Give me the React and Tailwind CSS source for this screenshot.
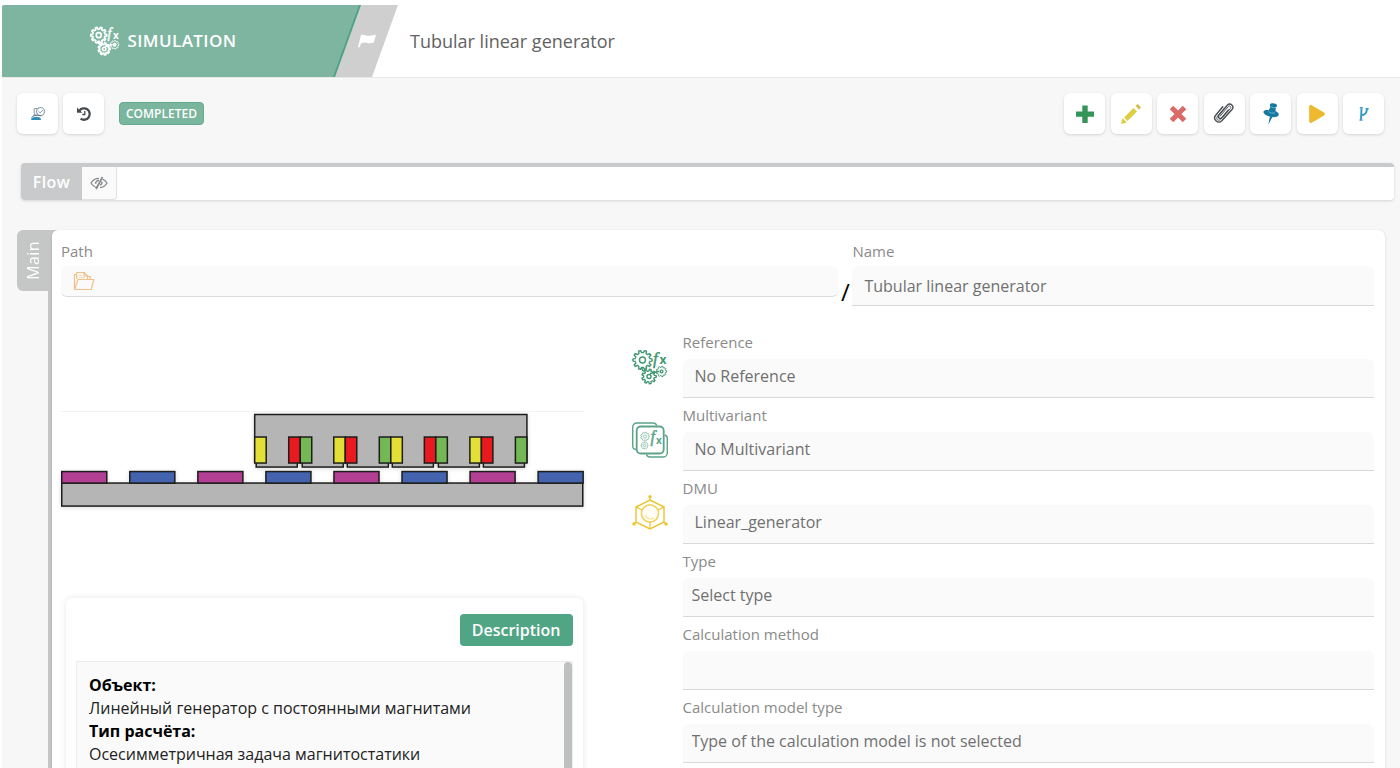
import { useState } from 'react';
import { FaPlay } from 'react-icons/fa';

// Closed outline of a gear with square-ish teeth
function gearPath(cx, cy, outer, inner, teeth) {
    const step = (Math.PI * 2) / teeth;
    const points = [];
    for (let i = 0; i < teeth; i++) {
        const a = i * step;
        [[inner, -0.3], [outer, -0.18], [outer, 0.18], [inner, 0.3]].forEach(([r, k]) => {
            points.push(`${(cx + r * Math.cos(a + k * step)).toFixed(2)} ${(cy + r * Math.sin(a + k * step)).toFixed(2)}`);
        });
    }
    return `M${points.join('L')}Z`;
}

const GearsIcon = ({ className, stroke = 1.4 }) => (
    <svg viewBox="0 0 36 36" className={className} fill="none" stroke="currentColor" strokeWidth={stroke} strokeLinejoin="round" overflow="visible" aria-hidden="true">
        <path d={gearPath(10.5, 11, 9.6, 7.4, 10)} />
        <circle cx="10.5" cy="11" r="3" />
        <path d={gearPath(17, 27.5, 7.2, 5.4, 9)} />
        <circle cx="17" cy="27.5" r="2" />
        <path d={gearPath(29.5, 22.5, 5.2, 4.2, 9)} strokeWidth="1" />
        <circle cx="29.5" cy="22.5" r="1.4" />
        <path d="M9.5 18.5c.5 2.500 1.500 3.500 3 4M18 24.500c3 .2 5-2 9-2" />
        <text x="21" y="14.500" fontSize="17" fontStyle="italic" fontFamily="Liberation Serif, serif" fill="currentColor" strokeWidth="0.5">f</text>
        <text x="27.500" y="15" fontSize="12" fontWeight="bold" fontFamily="Open Sans, sans-serif" fill="currentColor" stroke="none">x</text>
    </svg>
);

const MultivariantIcon = ({ className }) => (
    <svg viewBox="0 0 36 36" className={className} fill="none" stroke="currentColor" strokeWidth="1.4" aria-hidden="true">
        <path d="M4 27.500a3.500 3.500 0 0 1-3.300-3.500V5A4 4 0 0 1 4.700 1H21a4 4 0 0 1 3.800 2.600" />
        <path d="M32.500 13a3.500 3.500 0 0 1 2.800 3.500V31a4 4 0 0 1-4 4H18a4 4 0 0 1-3.600-2.600" />
        <rect x="4.700" y="4.500" width="27" height="27" rx="4" strokeWidth="1.800" />
        <g strokeWidth="0.8" opacity="0.75">
            <path d={gearPath(13, 14.500, 4.400, 3.500, 9)} />
            <circle cx="13" cy="14.500" r="1.600" />
            <path d={gearPath(12.500, 23.500, 3.600, 2.800, 8)} />
            <circle cx="12.500" cy="23.500" r="1.200" />
        </g>
        <text x="18.500" y="20" fontSize="16" fontStyle="italic" fontFamily="Liberation Serif, serif" fill="currentColor" strokeWidth="0.5">f</text>
        <text x="24" y="22" fontSize="10" fontWeight="bold" fontFamily="Open Sans, sans-serif" fill="currentColor" stroke="none">x</text>
    </svg>
);

const DmuIcon = ({ className }) => (
    <svg viewBox="0 0 36 36" className={className} fill="none" stroke="currentColor" strokeWidth="1.400" aria-hidden="true">
        <path d="M18 5l14 7v15l-14 7-14-7V12z" />
        <path d="M18 1.500V5M2 29l2-2M34 29l-2-2M4 12l6 3M32 12l-6 3M18 27v7" strokeWidth="1.200" />
        <circle cx="18" cy="18.500" r="8.600" fill="#fffdf2" strokeWidth="1.600" opacity="0.75" />
        <path d="M13 20c1 3.500 5 5 9 3" opacity="0.4" />
        <g fill="currentColor" stroke="none">
            <circle cx="18" cy="1.800" r="1.700" />
            <circle cx="2" cy="29" r="1.700" />
            <circle cx="34" cy="29" r="1.700" />
            <circle cx="5" cy="12" r="1.300" />
            <circle cx="31" cy="12" r="1.300" />
        </g>
    </svg>
);

const FlagIcon = () => (
    <svg viewBox="0 0 20 16" className="w-5 h-4" fill="currentColor" aria-hidden="true">
        <path d="M4 2C7 .8 9 3.500 12.500 2.800c2.500-.5 4-.8 6.500-1L16.800 9.500c-3 1-5 1-7 .4-2.200-.7-4-.3-5.800.6L2.500 14.500 1 14z" />
    </svg>
);

const UserCheckIcon = () => (
    <svg viewBox="0 0 16 16" className="w-4 h-4" fill="none" aria-hidden="true">
        <path d="M4.500 2.500h4M4.200 2.500v3.700c0 1.500 1 2.700 2.300 2.700M3 9.500l2-1" stroke="#8497a8" />
        <circle cx="10.500" cy="5.500" r="4" stroke="#8fa3b3" strokeWidth="1.200" />
        <path d="M8.500 5.300l1.700 1.600 2.600-2.900" stroke="#8497a8" />
        <path d="M1 14c0-2 1.700-3 4.200-3h2.300c2.500 0 3.500 1 3.500 3z" fill="#2f8db5" />
        <path d="M1.500 11.500c2-2.500 7-2.500 10-1.500" stroke="#53718c" />
    </svg>
);

const HistoryIcon = () => (
    <svg viewBox="0 0 16 16" className="w-4 h-4" fill="none" stroke="#484b4e" aria-hidden="true">
        <path d="M3.200 5A5.700 5.700 0 1 1 4.600 12.600" strokeWidth="2.300" />
        <path d="M1 1.500v5.300h5.300z" fill="#484b4e" stroke="none" />
        <path d="M8.800 5v3.500H6.300" strokeWidth="1.300" />
    </svg>
);

const PlusIcon = () => (
    <svg viewBox="0 0 20 20" className="w-5 h-5" fill="#359558" aria-hidden="true">
        <path d="M7.300 1.500h5.400v6h6.300v5.200h-6.300v6.300H7.300v-6.300H1V7.500h6.300z" />
    </svg>
);

const PencilIcon = () => (
    <svg viewBox="0 0 22 22" className="w-[22px] h-[22px]" fill="#dccf45" aria-hidden="true">
        <path d="M1 21l1.500-6L7 19.500z" />
        <path d="M4 14.500L13.500 5 17 8.500 7.500 18z" />
        <path d="M15.500 3l1.200-1.200c.6-.6 1.200-.6 1.800 0l1.800 1.800c.6.6.6 1.200 0 1.800L19 6.500z" fill="#d6bf4b" />
    </svg>
);

const CrossIcon = () => (
    <svg viewBox="0 0 18 18" className="w-[18px] h-[18px]" fill="none" stroke="#d96a66" strokeWidth="5" aria-hidden="true">
        <path d="M2.500 2.500l13 13M15.500 2.500l-13 13" />
    </svg>
);

const ClipIcon = () => (
    <svg viewBox="0 0 24 24" className="w-6 h-6" fill="none" stroke="#454b50" strokeWidth="1.400" strokeLinecap="round" strokeLinejoin="round" aria-hidden="true">
        <path d="M10.800 4.800L3.500 13.500c-3 4 2.700 8.800 6.300 5.200L20 7.500c2.800-3.500-1.700-7.300-4.700-4.300L6.800 13.200c-1.600 2.200 1 4.400 3 2.500L16.500 8" />
        <path d="M12.600 6L5.300 14.600c-1.800 2.600 1 5 3.200 2.800L18.300 6.600c1.400-1.900-.5-3.400-2-2L8 14.300" strokeWidth="0.900" />
    </svg>
);

const PinIcon = () => (
    <svg viewBox="0 0 20 24" className="w-5 h-6" fill="#16799f" aria-hidden="true">
        <path d="M9 2.500C9.500 .5 16 1 16 3.500c0 1-.7 1.600-1.200 2l-.3 3.700C17 10 18.500 12 17.500 13.500c-1.500 2-5.500 2-8.500 1-4-1-7-3-6.500-5 .4-1.700 3.500-2 5.200-1.200L9.300 5.200C8.800 4.600 8.800 3.500 9 2.500z" />
        <path d="M9 14l2.600.6L9 19.600l-1.700 2.900z" />
        <path d="M9.500 4.500c1.500 1.200 3.500 1.500 5.500 1M7.500 9.500c1.500 1.500 4 2 6.500 1.300" stroke="#7fc0d8" strokeWidth="0.800" fill="none" />
    </svg>
);

const BranchIcon = () => (
    <svg viewBox="0 0 12 16" className="w-3 h-4" fill="none" stroke="#3a9cc4" strokeWidth="2" aria-hidden="true">
        <path d="M3.500 2.500L3 13.500M3.200 9.500c4.300-.8 5.300-2.500 5.800-6.500" />
        <path d="M1.800 1.800h3M1.500 14h3M7.500 2.800h3.200" strokeWidth="1.600" />
    </svg>
);

const HiddenIcon = () => (
    <svg viewBox="0 0 18 14" className="w-[18px] h-[14px]" fill="none" stroke="#85888a" strokeWidth="1.300" aria-hidden="true">
        <path d="M8 11.500C5 11.500 2.500 9.500 1 7c1.800-3 4.500-4.600 8-4.600M12.500 3.200C14.500 4 16 5.300 17 7c-1.500 2.700-4 4.400-7 4.600" />
        <path d="M9 4.500C6.500 4.500 5.500 6 5.700 8M12 5.500c.3 2-.5 3-2 3.700" />
        <path d="M12.500 1L6 13" strokeWidth="1.600" />
    </svg>
);

const FolderIcon = () => (
    <svg viewBox="0 0 22 20" className="w-[22px] h-5" fill="none" stroke="#f0c08a" strokeWidth="1.200" strokeLinejoin="round" aria-hidden="true">
        <path d="M1.500 18V3.500h2.200M3.700 8V1.500h7.500L14.500 5v3M11 1.500V5h3.500M14.500 5.500h2.700V8" />
        <path d="M1.500 18.500L5 8.500h15.800l-2.600 10z" />
        <path d="M6 4.500h3M6 6.500h6" stroke="#f5d7b3" />
    </svg>
);

const MAGNETS = [0, 68, 136, 204, 272, 340, 408, 476];
const FEET = [195, 241, 286, 331, 377, 422];
const COILS = [
    [193.5, '#e3df36'],
    [227.5, '#e8191f'], [239, '#74b856'],
    [272.5, '#e3df36'], [284, '#e8191f'],
    [318, '#74b856'], [329.5, '#e3df36'],
    [363, '#e8191f'], [374.5, '#74b856'],
    [408.5, '#e3df36'], [420, '#e8191f'],
    [454, '#74b856']
];

// Cross-section of the generator: moving core with coils above the magnet rail
const GeneratorDrawing = () => (
    <svg viewBox="0 0 522 96" className="w-full drop-shadow-sm" stroke="#1d1d1b" strokeWidth="1.500" role="img" aria-label="Tubular linear generator">
        {FEET.map(x => <rect key={x} x={x} y="45" width="41" height="10" fill="#b5b5b5" />)}
        <rect x="193.500" y="2.500" width="272" height="48.500" fill="#b5b5b5" stroke="none" />
        <path d="M193.500 51V2.500h272V51" fill="none" />
        {COILS.map(([x, fill]) => <rect key={x} x={x} y="25" width="11.500" height="26" fill={fill} />)}
        <rect x="0.700" y="71" width="520.600" height="23" fill="#b5b5b5" />
        {MAGNETS.map((x, i) => (
            <rect key={x} x={x + 0.7} y="59.500" width="45" height="11.500" fill={i % 2 ? '#4463ae' : '#b23f94'} />
        ))}
    </svg>
);

const ToolButton = ({ label, children }) => (
    <button type="button" aria-label={label} className="w-[41px] h-[41px] rounded-md bg-white shadow-[0_1px_3px_rgba(0,0,0,0.14)] flex items-center justify-center">
        {children}
    </button>
);

const labelClass = 'block h-5 text-[15px] leading-5 text-[#8a8a8a]';
const fieldClass = 'block w-full rounded-t-md border-b border-[#d8d8d8] bg-[#fafafa] text-base text-[#707070] outline-none appearance-none';

const FormRow = ({ id, label, icon, children }) => (
    <div className="flex">
        <div className="w-[51px] shrink-0 pt-[17px]">{icon}</div>
        <div className="flex-1">
            <label htmlFor={id} className={`${labelClass} mb-[7px]`}>{label}</label>
            {children}
        </div>
    </div>
);

const App = () => {
    const [form, setForm] = useState({
        path: '',
        name: 'Tubular linear generator',
        reference: 'No Reference',
        multivariant: 'No Multivariant',
        dmu: 'Linear_generator',
        method: ''
    });

    const handleChange = (e) => setForm({ ...form, [e.target.id]: e.target.value });

    return (
        <div className="h-screen overflow-hidden bg-white pt-[5px] pl-[2px] font-['Open_Sans',sans-serif]">
            <div className="min-h-full bg-[#f7f7f7]">
                <header className="flex h-[73px] items-stretch bg-white border-b border-[#e8e8e8]">
                    <div className="w-[396px] shrink-0 bg-[#cfcfcf] flex [clip-path:polygon(0_0,100%_0,calc(100%_-_26px)_100%,0_100%)]">
                        <div className="w-[359px] bg-[#4ea384] rounded-tl [clip-path:polygon(0_0,100%_0,calc(100%_-_26px)_100%,0_100%)]">
                            <div className="w-[357px] h-full bg-[#7db5a0] rounded-tl flex items-center justify-center gap-[7px] pr-[34px] text-white [clip-path:polygon(0_0,100%_0,calc(100%_-_26px)_100%,0_100%)]">
                                <GearsIcon className="w-[30px] h-[30px]" stroke={2} />
                                <span className="text-[17px] font-semibold tracking-wide">SIMULATION</span>
                            </div>
                        </div>
                        <div className="-ml-1 flex items-center text-white">
                            <FlagIcon />
                        </div>
                    </div>
                    <h1 className="flex items-center pl-3 text-lg font-normal text-[#626262]">Tubular linear generator</h1>
                </header>

                <div className="flex items-center justify-between pt-[15px] pl-[15px] pr-4">
                    <div className="flex items-center gap-[5px]">
                        <ToolButton label="Assign"><UserCheckIcon /></ToolButton>
                        <ToolButton label="History"><HistoryIcon /></ToolButton>
                        <span className="ml-[10px] h-[23px] rounded border border-[#66aa8f] bg-[#7ab59d] px-[6px] text-xs leading-[21px] font-semibold text-white">COMPLETED</span>
                    </div>
                    <div className="flex w-[320px] justify-between">
                        <ToolButton label="Add"><PlusIcon /></ToolButton>
                        <ToolButton label="Edit"><PencilIcon /></ToolButton>
                        <ToolButton label="Delete"><CrossIcon /></ToolButton>
                        <ToolButton label="Attach"><ClipIcon /></ToolButton>
                        <ToolButton label="Pin"><PinIcon /></ToolButton>
                        <ToolButton label="Run"><FaPlay className="w-4 h-[18px] text-[#efb92f]" /></ToolButton>
                        <ToolButton label="Branch"><BranchIcon /></ToolButton>
                    </div>
                </div>

                <section className="mt-[29px] ml-[19px] mr-[6px] flex h-[37px] rounded border-t-4 border-[#c9cacb] bg-white shadow-[0_1px_3px_rgba(0,0,0,0.14)]">
                    <h2 className="-mt-[3px] flex w-[61px] items-center justify-center rounded-l bg-[#c9cacb] text-base font-semibold tracking-wide text-white">Flow</h2>
                    <button type="button" aria-label="Hide flow" className="flex w-[35px] items-center justify-center rounded-br border-r border-b border-[#e2e2e2] bg-[#fafafa]">
                        <HiddenIcon />
                    </button>
                </section>

                <main className="mt-[30px] px-[15px] flex items-start">
                    <button type="button" className="flex h-[61px] w-[31px] shrink-0 items-center justify-center rounded-l-md bg-[#c5c6c6] text-white">
                        <span className="text-base font-medium tracking-wide [writing-mode:vertical-rl] rotate-180">Main</span>
                    </button>
                    <div className="flex-1 rounded-r-md bg-[#c5c6c6] pl-1">
                        <div className="rounded-md bg-white pl-[9px] pr-[11px] pt-[11px] shadow-[0_1px_3px_rgba(0,0,0,0.14)]">
                            <div className="grid grid-cols-[79fr_14px_53fr]">
                                <div>
                                    <label htmlFor="path" className={`${labelClass} mb-[5px]`}>Path</label>
                                    <div className="flex h-[31px] items-center rounded-md border-b border-[#dcdcdc] bg-[#fafafa] pl-3">
                                        <button type="button" aria-label="Open folder"><FolderIcon /></button>
                                        <input id="path" value={form.path} onChange={handleChange} className="ml-2 h-6 flex-1 bg-transparent outline-none" />
                                    </div>
                                </div>
                                <span className="self-end text-center text-2xl leading-7 text-black">/</span>
                                <div>
                                    <label htmlFor="name" className={`${labelClass} mb-[5px]`}>Name</label>
                                    <input id="name" value={form.name} onChange={handleChange} className={`${fieldClass} h-10 px-3`} />
                                </div>
                            </div>

                            <div className="mt-[26px] grid grid-cols-[19fr_27fr] gap-12">
                                <div className="pt-[79px]">
                                    <div className="border-t border-[#f3f3f3]">
                                        <GeneratorDrawing />
                                    </div>
                                    <div className="ml-[5px] mr-px mt-[90px] rounded-md bg-white px-[10px] pt-4 shadow-[0_0_6px_rgba(0,0,0,0.1)]">
                                        <div className="flex justify-end">
                                            <button type="button" className="h-8 rounded bg-[#50a585] px-3 pb-px text-base font-semibold text-white">Description</button>
                                        </div>
                                        <div className="mt-[15px] flex min-h-60 border border-[#ececec] bg-[#fafafa]">
                                            <div className="flex-1 px-3 pt-3 text-base leading-[23px] text-[#222]">
                                                <p className="font-bold text-black">Объект:</p>
                                                <p>Линейный генератор с постоянными магнитами</p>
                                                <p className="font-bold text-black">Тип расчёта:</p>
                                                <p>Осесимметричная задача магнитостатики</p>
                                            </div>
                                            <div className="w-2 rounded-t bg-[#bfc1c1]" />
                                        </div>
                                    </div>
                                </div>

                                <form className="flex flex-col gap-[7px]">
                                    <FormRow id="reference" label="Reference" icon={<GearsIcon className="w-9 h-9 text-[#3f9772]" />}>
                                        <input id="reference" value={form.reference} onChange={handleChange} className={`${fieldClass} h-[39px] px-3 pb-1`} />
                                    </FormRow>
                                    <FormRow id="multivariant" label="Multivariant" icon={<MultivariantIcon className="w-9 h-9 text-[#5ca488]" />}>
                                        <input id="multivariant" value={form.multivariant} onChange={handleChange} className={`${fieldClass} h-[39px] px-3 pb-1`} />
                                    </FormRow>
                                    <FormRow id="dmu" label="DMU" icon={<DmuIcon className="w-9 h-9 text-[#ecc531]" />}>
                                        <input id="dmu" value={form.dmu} onChange={handleChange} className={`${fieldClass} h-[39px] px-3 pb-1`} />
                                    </FormRow>
                                    <FormRow id="type" label="Type">
                                        <select id="type" className={`${fieldClass} h-[39px] px-[9px] pb-1`}>
                                            <option>Select type</option>
                                        </select>
                                    </FormRow>
                                    <FormRow id="method" label="Calculation method">
                                        <input id="method" value={form.method} onChange={handleChange} className={`${fieldClass} h-[39px] px-3 pb-1`} />
                                    </FormRow>
                                    <FormRow id="model" label="Calculation model type">
                                        <select id="model" className={`${fieldClass} h-[39px] px-[9px] pb-1`}>
                                            <option>Type of the calculation model is not selected</option>
                                        </select>
                                    </FormRow>
                                </form>
                            </div>
                        </div>
                    </div>
                </main>
            </div>
        </div>
    );
};

export default App;
